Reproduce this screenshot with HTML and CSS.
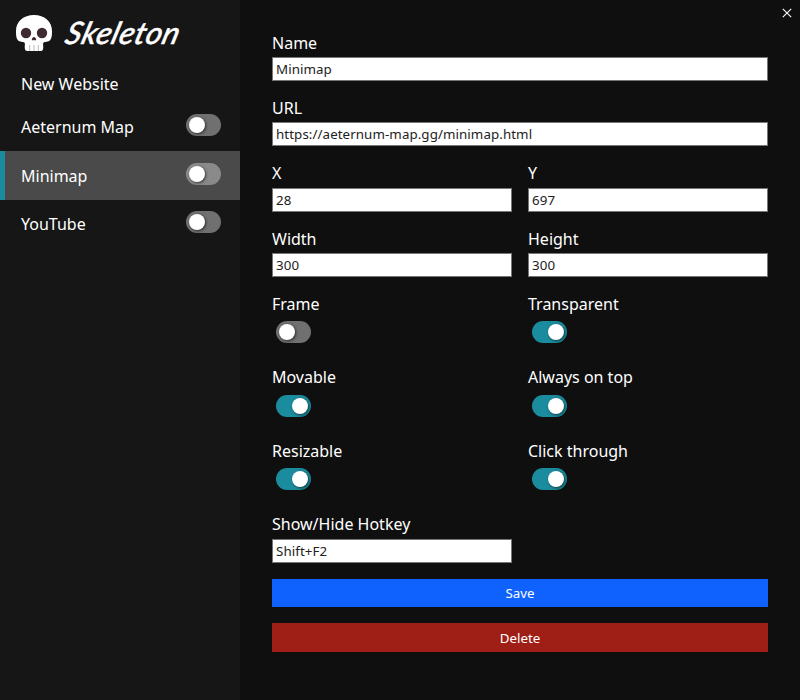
FILE: index.html
```html
<!DOCTYPE html>
<html lang="en">
<head>
<meta charset="UTF-8" />
<meta name="viewport" content="width=device-width, initial-scale=1.0">
<title>Skeleton</title>
<link rel="stylesheet" href="styles.css">
</head>
<body>

<aside class="sidebar">
  <header class="brand">
    <svg class="skull" viewBox="0 0 36 36">
      <path fill="#fff" d="M18 0C7.500 0 0 6.500 0 16c0 5 .3 9 3.500 10.300 2.300.9 4.900.4 5.300 1.900.4 1.500-.5 4 .2 6.200.4 1.200 1.600 1.600 3.200 1.600h11.600c1.600 0 2.800-.4 3.200-1.600.7-2.200-.2-4.700.2-6.200.4-1.500 3-1 5.300-1.900C35.700 25 36 21 36 16 36 6.500 28.500 0 18 0z"/>
      <circle cx="10" cy="18" r="5.200" fill="#3f2a32"/>
      <circle cx="26" cy="18" r="5.200" fill="#3f2a32"/>
      <path fill="#3f2a32" d="M18 22c-1.200 0-2.200 1.500-2.200 2.600 0 1 1.300 1 2.200.3.900.7 2.200.7 2.200-.3 0-1.100-1-2.600-2.200-2.600z"/>
      <path stroke="#aaa" stroke-width=".8" d="M13.700 30v6M18 30v6M22.300 30v6"/>
    </svg>
    <span class="logo">Skeleton</span>
  </header>
  <nav>
    <a class="item new">New Website</a>
    <a class="item">Aeternum Map <span class="switch"></span></a>
    <a class="item active">Minimap <span class="switch"></span></a>
    <a class="item">YouTube <span class="switch"></span></a>
  </nav>
</aside>

<main>
  <svg class="close" viewBox="0 0 10 10"><path d="M.8.8l8.400 8.400M9.200.8L.8 9.200"/></svg>
  <form class="settings">
    <label class="field wide">Name <input type="text" value="Minimap"></label>
    <label class="field wide">URL <input type="text" value="https://aeternum-map.gg/minimap.html"></label>
    <label class="field">X <input type="text" value="28"></label>
    <label class="field">Y <input type="text" value="697"></label>
    <label class="field">Width <input type="text" value="300"></label>
    <label class="field">Height <input type="text" value="300"></label>
    <label class="field toggle">Frame <span class="switch"></span></label>
    <label class="field toggle">Transparent <span class="switch on"></span></label>
    <label class="field toggle">Movable <span class="switch on"></span></label>
    <label class="field toggle">Always on top <span class="switch on"></span></label>
    <label class="field toggle">Resizable <span class="switch on"></span></label>
    <label class="field toggle">Click through <span class="switch on"></span></label>
    <label class="field">Show/Hide Hotkey <input type="text" value="Shift+F2"></label>
    <button class="wide save" type="button">Save</button>
    <button class="wide delete" type="button">Delete</button>
  </form>
</main>

</body>
</html>
```

FILE: styles.css
```css
* { box-sizing: border-box; }
body { margin: 0; height: 100vh; display: flex; font: 16px/22px "Noto Sans", sans-serif; background: #0f0f0f; color: #fff; overflow: hidden; }

.sidebar { width: 240px; background: #161616; }
.brand { display: flex; align-items: center; height: 65px; padding: 0 16px; }
.skull { width: 36px; height: 36px; }
.logo { margin-left: 15px; font: italic 500 31px/36px Lato, sans-serif; -webkit-text-stroke: .4px #fff; letter-spacing: .5px; transform: translateY(-1px) skewX(-16deg); }

.item { display: flex; justify-content: space-between; align-items: center; height: 48.600px; padding: 0 19px 0 16px; border-left: 5px solid transparent; }
.item.new { height: 37.500px; }
.item.active { padding-top: 1px; background: #4a4a4a; border-color: #1b8c9e; }
.item .switch { margin-bottom: 4px; }
.item.active .switch { background: #8a8a8a; }

.switch { display: block; width: 35px; height: 22px; padding: 3px; border-radius: 11px; background: #707070; }
.switch::before { content: ""; display: block; width: 16px; height: 16px; border-radius: 50%; background: #fff; box-shadow: 1px 1px 3px rgba(0, 0, 0, .6); }
.switch.on { background: #1b8c9e; }
.switch.on::before { margin-left: 13px; }

main { flex: 1; position: relative; padding: 31.850px 32px; }
.close { position: absolute; top: 8px; right: 8px; width: 10px; height: 10px; stroke: #fff; stroke-width: 1.100; }

.settings { display: grid; grid-template-columns: 1fr 1fr; gap: 16px; }
.wide { grid-column: span 2; }
.field { display: block; height: 49.300px; }
.toggle { height: 57.400px; }
.toggle .switch { margin: 6.150px 0 0 4px; }
.field input { display: block; width: 100%; height: 24px; margin-top: 3.300px; padding: 1px 3px; border: 1px solid #767676; font: 13.333px "Noto Sans", sans-serif; letter-spacing: .08px; color: #222; background: #fff; }
button { padding: 0; border: none; font: 13.333px "Noto Sans", sans-serif; color: #fff; }
.save { height: 28.300px; background: #0f62fe; }
.delete { height: 28.800px; padding-top: 1px; background: #9f1f17; }
```
